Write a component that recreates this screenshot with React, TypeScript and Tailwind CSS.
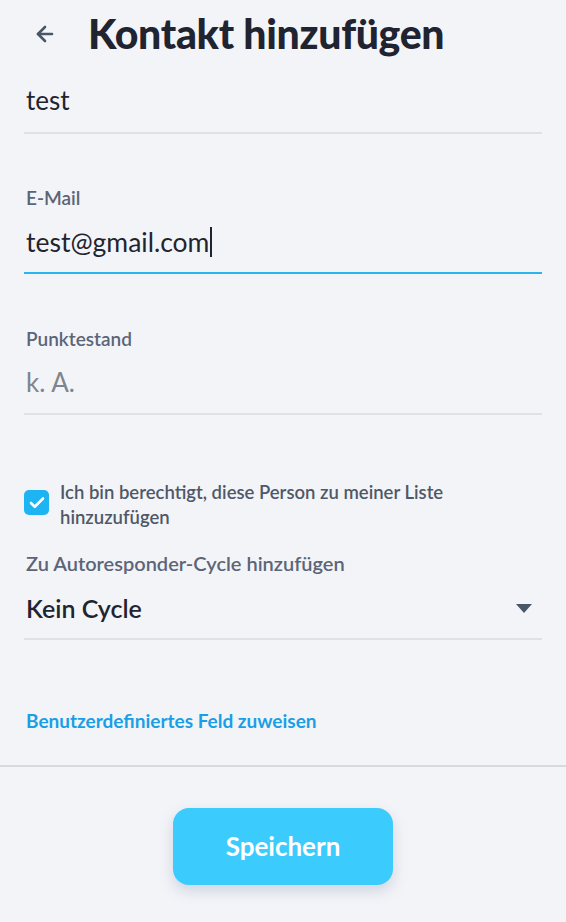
import { ArrowLeft, Check } from "lucide-react";

// Kontakt hinzufügen — mobile form
export default function App() {
  return (
    <div className="min-h-[922px] w-full bg-[#f3f4f8] font-['Lato',sans-serif] text-[#1f2430]">
      {/* header */}
      <div className="flex h-[68px] items-center">
        <button className="ml-[33px] flex h-[24px] w-[24px] items-center justify-center text-[#4a5568]" aria-label="Zurück">
          <ArrowLeft size={24} strokeWidth={2.6} />
        </button>
        <h1 className="ml-[31px] text-[41px] leading-[48px] font-black tracking-[-0.3px]">
          Kontakt hinzufügen
        </h1>
      </div>

      <div className="px-[24px]">
        {/* name */}
        <div className="border-b-2 border-[#dfe1e6] pt-[16px] pb-[16px]">
          <div className="pl-[2px] text-[26px] leading-[32px]">test</div>
        </div>

        {/* email */}
        <div className="mt-[53px]">
          <div className="pl-[2px] text-[19px] leading-[22px] font-semibold text-[#5b6577]">E-Mail</div>
          <div className="mt-[17px] border-b-2 border-[#2bb5f0] pb-[14px]">
            <div className="flex items-center pl-[2px] text-[26.5px] leading-[32px]">
              test@gmail.com
              <span className="ml-[1px] inline-block h-[30px] w-[2px] bg-[#1f2430]" />
            </div>
          </div>
        </div>

        {/* score */}
        <div className="mt-[54px]">
          <div className="pl-[2px] text-[19px] leading-[22px] font-semibold text-[#5b6577]">Punktestand</div>
          <div className="mt-[16px] border-b-2 border-[#dfe1e6] pb-[15px]">
            <div className="pl-[2px] text-[26px] leading-[32px] text-[#80858d]">k. A.</div>
          </div>
        </div>

        {/* permission */}
        <div className="mt-[65px] flex items-start gap-[11px]">
          <div className="mt-[10px] flex h-[25px] w-[25px] shrink-0 items-center justify-center rounded-[5px] bg-[#1cb4f3] text-white">
            <Check size={18} strokeWidth={3.5} />
          </div>
          <p className="pr-[60px] text-[18.5px] leading-[25px] font-semibold text-[#4f5868]">
            Ich bin berechtigt, diese Person zu meiner Liste hinzuzufügen
          </p>
        </div>

        {/* autoresponder */}
        <div className="mt-[22px]">
          <div className="pl-[2px] text-[20px] leading-[22px] font-semibold text-[#5b6577]">
            Zu Autoresponder-Cycle hinzufügen
          </div>
          <div className="mt-[18px] flex items-center justify-between border-b-2 border-[#dfe1e6] pb-[14px]">
            <span className="pl-[2px] text-[25px] leading-[32px] font-semibold">Kein Cycle</span>
            <svg width="16" height="9" viewBox="0 0 16 9" className="mr-[10px] text-[#4a5568]">
              <path d="M0 0h16L8 9z" fill="currentColor" />
            </svg>
          </div>
        </div>

        {/* custom field */}
        <div className="mt-[70px] pl-[2px] text-[19px] leading-[22px] font-bold text-[#1a9fe6]">
          Benutzerdefiniertes Feld zuweisen
        </div>
      </div>

      <div className="mt-[33px] border-t-2 border-[#d8dadf]" />

      {/* save */}
      <div className="flex justify-center pt-[41px]">
        <button className="h-[77px] w-[220px] rounded-[16px] bg-[#3ccbfd] text-[26px] font-bold text-white shadow-[0_6px_14px_rgba(100,120,150,0.25)]">
          Speichern
        </button>
      </div>
    </div>
  );
}
